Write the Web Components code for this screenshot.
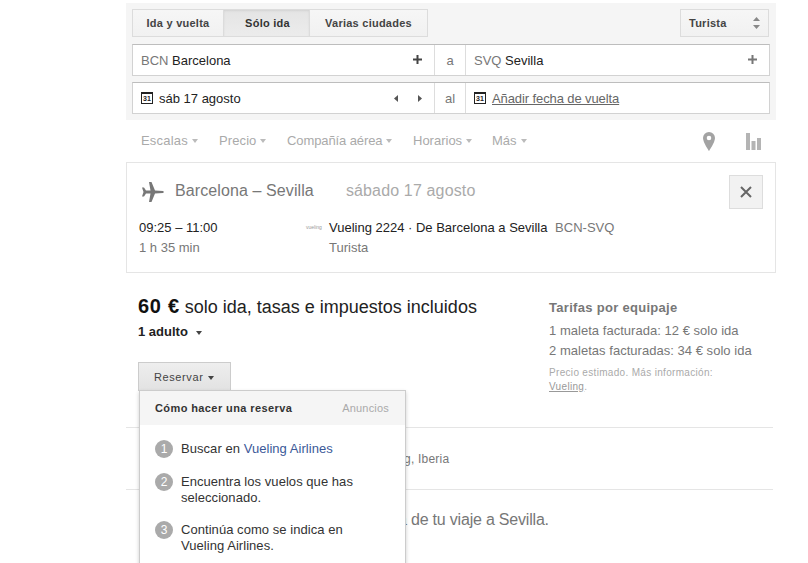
<!DOCTYPE html>
<html>
<head>
<meta charset="utf-8">
<title>Vuelos</title>
<style>
    html, body { margin: 0; background: #fff; }
    body { font-family: "Liberation Sans", Arial, sans-serif; font-size: 13px; color: #222; }
</style>
</head>
<body>
<gf-app>
    <gf-search></gf-search>
    <gf-filters></gf-filters>
    <gf-flight></gf-flight>
    <gf-fare></gf-fare>
    <gf-note pad="244" top>Vueling, Iberia</gf-note>
    <gf-note pad="272" big top>a de tu viaje a Sevilla.</gf-note>
</gf-app>

<script>
class GfApp extends HTMLElement {
    constructor() {
        super();
        this.attachShadow({ mode: 'open' });
    }
    connectedCallback() {
        this.shadowRoot.innerHTML = `
        <style>
            :host {
                display: block;
                height: 563px;
                overflow: hidden;
                padding-left: 126px;
                box-sizing: border-box;
            }
            .wrap { width: 650px; padding-top: 3px; }
        </style>
        <div class="wrap"><slot></slot></div>
        `;
    }
}

class GfCal extends HTMLElement {
    constructor() {
        super();
        this.attachShadow({ mode: 'open' });
    }
    connectedCallback() {
        this.shadowRoot.innerHTML = `
        <style>
            :host {
                display: inline-flex;
                width: 12px;
                height: 12px;
                box-sizing: border-box;
                border: 1px solid #222;
                border-top-width: 2px;
                background: #fff;
                align-items: center;
                justify-content: center;
                font: bold 7px/8px "Liberation Sans", Arial, sans-serif;
                color: #222;
                flex: none;
            }
        </style>31`;
    }
}

class GfSearch extends HTMLElement {
    constructor() {
        super();
        this.attachShadow({ mode: 'open' });
    }
    connectedCallback() {
        this.shadowRoot.innerHTML = `
        <style>
            :host {
                display: block;
                background: #f5f5f5;
                padding: 6px;
                font-size: 13px;
            }
            .top { display: flex; justify-content: space-between; height: 28px; margin-bottom: 7px; }
            .tabs { display: flex; }
            .tab, .select {
                box-sizing: border-box;
                height: 28px;
                border: 1px solid #dcdcdc;
                background: linear-gradient(#f6f6f6, #f1f1f1);
                font-size: 11px;
                font-weight: bold;
                letter-spacing: 0.25px;
                color: #444;
                display: flex;
                align-items: center;
                justify-content: center;
            }
            .tab + .tab { border-left: 0; }
            .tab.on {
                background: linear-gradient(#e4e4e4, #ececec);
                box-shadow: inset 0 1px 2px rgba(0,0,0,.08);
                color: #333;
            }
            .select {
                width: 89px;
                margin-right: 1px;
                justify-content: space-between;
                padding: 0 8px;
            }
            .row {
                display: flex;
                height: 32px;
                box-sizing: border-box;
                background: #fff;
                border: 1px solid #d2d2d2;
                border-top-color: #bdbdbd;
                align-items: center;
            }
            .row + .row { margin-top: 6px; }
            .cell { display: flex; align-items: center; height: 100%; }
            .from { width: 302px; padding: 0 12px 0 8px; box-sizing: border-box; border-right: 1px solid #ddd; justify-content: space-between; }
            .mid { width: 30px; justify-content: center; color: #777; }
            .to { flex: 1; padding: 0 12px 0 8px; border-left: 1px solid #ddd; justify-content: space-between; }
            .code { color: #777; }
            .date { gap: 6px; display: flex; align-items: center; }
            .arrows { display: flex; gap: 18px; margin-right: 0; }
            a { color: #666; text-decoration: underline; letter-spacing: -0.1px; }
            svg { display: block; flex: none; }
            .plus { margin-top: -2px; }
        </style>
        <div class="top">
            <div class="tabs">
                <div class="tab" style="width:92px">Ida y vuelta</div>
                <div class="tab on" style="width:86px;padding-left:2px">Sólo ida</div>
                <div class="tab" style="width:118px">Varias ciudades</div>
            </div>
            <div class="select">Turista
                <svg width="7" height="12" viewBox="0 0 7 12"><path d="M3.5 0L7 4H0zM3.5 12L0 8h7z" fill="#888"/></svg>
            </div>
        </div>
        <div class="row">
            <div class="cell from"><span><span class="code">BCN</span> Barcelona</span>
                <svg class="plus" width="9" height="9" viewBox="0 0 9 9"><path d="M3.5 0h2v3.5H9v2H5.5V9h-2V5.5H0v-2h3.5z" fill="#444"/></svg>
            </div>
            <div class="cell mid">a</div>
            <div class="cell to"><span><span class="code">SVQ</span> Sevilla</span>
                <svg class="plus" width="9" height="9" viewBox="0 0 9 9"><path d="M3.5 0h2v3.5H9v2H5.5V9h-2V5.5H0v-2h3.5z" fill="#777"/></svg>
            </div>
        </div>
        <div class="row">
            <div class="cell from"><span class="date"><gf-cal></gf-cal>sáb 17 agosto</span>
                <span class="arrows">
                    <svg width="5" height="7" viewBox="0 0 5 7"><path d="M4 0v7L0 3.500z" fill="#555"/></svg>
                    <svg width="5" height="7" viewBox="0 0 5 7"><path d="M1 0v7l4-3.500z" fill="#555"/></svg>
                </span>
            </div>
            <div class="cell mid">al</div>
            <div class="cell to"><span class="date"><gf-cal></gf-cal><a>Añadir fecha de vuelta</a></span></div>
        </div>
        `;
    }
}

class GfFilters extends HTMLElement {
    constructor() {
        super();
        this.attachShadow({ mode: 'open' });
    }
    connectedCallback() {
        // ancho fijo por item, el texto de la captura no cae igual con esta fuente
        const items = [
            ['Escalas', 78, 0.2],
            ['Precio', 68, 0.1],
            ['Compañía aérea', 126, -0.1],
            ['Horarios', 79, 0],
            ['Más', 50, 0]
        ];
        this.shadowRoot.innerHTML = `
        <style>
            :host {
                display: flex;
                align-items: center;
                height: 42px;
                padding: 0 15px;
                color: #aaa;
                font-size: 13px;
            }
            .item { display: flex; align-items: center; margin-bottom: 2px; }
            .item i { width: 0; height: 0; margin-left: 4px; margin-top: 2px; border: 3.5px solid transparent; border-top: 4px solid #bbb; border-bottom: 0; }
            .icons { margin-left: auto; display: flex; align-items: center; gap: 31px; }
            svg { display: block; }
        </style>
        ${items.map(([n, w, ls]) => `<div class="item" style="width:${w}px;letter-spacing:${ls}px">${n}<i></i></div>`).join('')}
        <div class="icons">
            <svg width="12" height="19" viewBox="0 0 12 19"><path fill-rule="evenodd" d="M6 0a6 6 0 0 1 6 6c0 4.500-6 13-6 13S0 10.500 0 6a6 6 0 0 1 6-6zm0 3.700a2.300 2.300 0 1 0 0 4.600 2.300 2.300 0 0 0 0-4.600z" fill="#a3a3a3"/></svg>
            <svg width="15" height="17" viewBox="0 0 15 17"><path d="M0 0h4v17H0zM5.500 8H9.500v9H5.500zM11 5h4v12h-4z" fill="#b4b4b4"/></svg>
        </div>
        `;
    }
}

class GfFlight extends HTMLElement {
    constructor() {
        super();
        this.attachShadow({ mode: 'open' });
    }
    connectedCallback() {
        this.shadowRoot.innerHTML = `
        <style>
            :host {
                display: block;
                box-sizing: border-box;
                height: 111px;
                border: 1px solid #e5e5e5;
                padding: 12px 12px 0 12px;
                position: relative;
                font-size: 13px;
            }
            .head { display: flex; align-items: center; height: 34px; color: #777; font-size: 16px; margin-bottom: 9px; }
            .head svg { margin: 0 11px 0 3px; display: block; }
            .head span { margin-bottom: 2px; letter-spacing: 0.1px; }
            .head .day { color: #aaa; margin-left: 32px; letter-spacing: 0.15px; }
            .close {
                margin-left: auto;
                width: 34px;
                height: 34px;
                box-sizing: border-box;
                border: 1px solid #ddd;
                background: #f2f2f2;
                display: flex;
                align-items: center;
                justify-content: center;
            }
            .grid { display: grid; grid-template-columns: 190px 1fr; line-height: 20px; }
            .muted { color: #777; }
            .who { position: relative; }
            .badge { position: absolute; left: -23px; top: 5px; font-size: 5px; line-height: 8px; color: #999; }
            .code { margin-left: 4px; }
        </style>
        <div class="head">
            <svg width="22" height="20" viewBox="0 0 22 20"><path d="M22 10l-1-1-8-.500L9.500 0H7l1.500 8.500H4L2 5.500H0L1.500 10 0 14.500h2l2-3h4.500L7 20h2.500l3.500-8.500 8-.500z" fill="#777"/></svg>
            <span>Barcelona – Sevilla</span><span class="day">sábado 17 agosto</span>
            <div class="close"><svg style="margin:0" width="12" height="12" viewBox="0 0 12 12"><path d="M1 1l10 10M11 1L1 11" stroke="#666" stroke-width="2" fill="none"/></svg></div>
        </div>
        <div class="grid">
            <div>09:25 – 11:00</div>
            <div class="who"><span class="badge">vueling</span>Vueling 2224 · De Barcelona a Sevilla <span class="muted code">BCN-SVQ</span></div>
            <div class="muted">1 h 35 min</div>
            <div class="muted">Turista</div>
        </div>
        `;
    }
}

class GfFare extends HTMLElement {
    constructor() {
        super();
        this.attachShadow({ mode: 'open' });
    }
    connectedCallback() {
        this.shadowRoot.innerHTML = `
        <style>
            :host {
                display: block;
                height: 154px;
                box-sizing: border-box;
                position: relative;
                z-index: 2;
                padding: 23px 0 0 12px;
                font-size: 13px;
            }
            .cols { display: flex; }
            .left { width: 411px; }
            .price { font-size: 18px; line-height: 20px; color: #222; }
            .price b { font-size: 20px; color: #111; letter-spacing: 0.7px; }
            .adult { margin-top: 7px; line-height: 16px; font-weight: bold; display: flex; align-items: center; color: #222; }
            .adult i { margin-left: 8px; }
            i { display: block; width: 0; height: 0; border: 3.5px solid transparent; border-top: 4px solid #444; border-bottom: 0; margin-top: 1px; }
            .btn {
                margin-top: 22px;
                box-sizing: border-box;
                width: 93px;
                height: 29px;
                border: 1px solid #ccc;
                border-bottom: 0;
                background: linear-gradient(#eeeeee, #e2e2e2);
                color: #444;
                font-size: 11px;
                letter-spacing: 0.6px;
                display: flex;
                align-items: center;
                padding-left: 15px;
            }
            .btn i { margin-left: 5px; }
            .right { color: #777; line-height: 20px; letter-spacing: 0.03px; margin-top: 2px; }
            .right b { display: block; margin-bottom: 3px; letter-spacing: 0.3px; }
            .small { margin-top: 5px; color: #aaa; font-size: 10px; line-height: 14px; letter-spacing: 0.32px; }
            .small a { text-decoration: underline; color: #999; }
        </style>
        <div class="cols">
            <div class="left">
                <div class="price"><b>60 €</b> solo ida, tasas e impuestos incluidos</div>
                <div class="adult">1 adulto <i></i></div>
                <div class="btn">Reservar <i></i></div>
            </div>
            <div class="right">
                <b>Tarifas por equipaje</b>
                <div>1 maleta facturada: 12 € solo ida</div>
                <div>2 maletas facturadas: 34 € solo ida</div>
                <div class="small">Precio estimado. Más información:<br><a>Vueling</a>.</div>
            </div>
        </div>
        <gf-menu></gf-menu>
        `;
    }
}

class GfMenu extends HTMLElement {
    constructor() {
        super();
        this.attachShadow({ mode: 'open' });
    }
    connectedCallback() {
        this.shadowRoot.innerHTML = `
        <style>
            :host {
                display: block;
                position: absolute;
                left: 13px;
                top: 117px;
                width: 267px;
                height: 200px;
                box-sizing: border-box;
                background: #fff;
                border: 1px solid #ccc;
                box-shadow: 0 2px 4px rgba(0,0,0,.2);
                font-size: 13px;
            }
            .head {
                height: 34px;
                background: #f5f5f5;
                display: flex;
                align-items: center;
                justify-content: space-between;
                padding: 0 16px 0 15px;
                font-size: 11px;
            }
            .head b { color: #333; letter-spacing: 0.4px; }
            .head span { color: #aaa; letter-spacing: 0.2px; }
            ol { list-style: none; margin: 0; padding: 16px 15px 0 15px; }
            li { display: flex; margin-bottom: 16px; line-height: 16px; color: #333; letter-spacing: 0.05px; }
            .n {
                flex: none;
                width: 18px;
                height: 18px;
                margin: -1px 8px 0 0;
                border-radius: 50%;
                background: #aaa;
                color: #fff;
                font-size: 12px;
                text-align: center;
                line-height: 18px;
                letter-spacing: 0;
            }
            a { color: #3b5998; }
        </style>
        <div class="head"><b>Cómo hacer una reserva</b><span>Anuncios</span></div>
        <ol>
            <li><span class="n">1</span><div>Buscar en <a>Vueling Airlines</a></div></li>
            <li><span class="n">2</span><div>Encuentra los vuelos que has<br>seleccionado.</div></li>
            <li><span class="n">3</span><div>Continúa como se indica en<br>Vueling Airlines.</div></li>
        </ol>
        `;
    }
}

class GfNote extends HTMLElement {
    constructor() {
        super();
        this.attachShadow({ mode: 'open' });
    }
    connectedCallback() {
        const pad = this.getAttribute('pad');
        this.shadowRoot.innerHTML = `
        <style>
            :host {
                display: flex;
                align-items: center;
                box-sizing: border-box;
                width: 647px;
                height: 62px;
                border-top: 1px solid #e5e5e5;
                color: #777;
                font-size: 12px;
                letter-spacing: 0.2px;
                padding-left: ${pad}px;
            }
            :host([big]) { font-size: 16px; letter-spacing: -0.2px; height: 60px; }
        </style>
        <slot></slot>
        `;
    }
}

customElements.define('gf-app', GfApp);
customElements.define('gf-cal', GfCal);
customElements.define('gf-search', GfSearch);
customElements.define('gf-filters', GfFilters);
customElements.define('gf-flight', GfFlight);
customElements.define('gf-menu', GfMenu);
customElements.define('gf-fare', GfFare);
customElements.define('gf-note', GfNote);
</script>
</body>
</html>
